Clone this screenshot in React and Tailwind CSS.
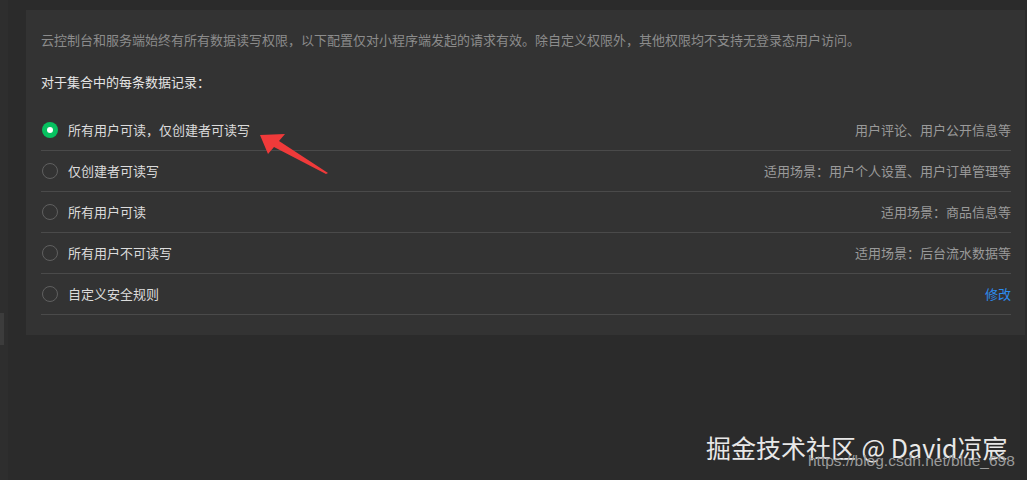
import React, { useState } from "react";

const rules = [
  { label: "所有用户可读，仅创建者可读写", desc: "用户评论、用户公开信息等" },
  { label: "仅创建者可读写", desc: "适用场景：用户个人设置、用户订单管理等" },
  { label: "所有用户可读", desc: "适用场景：商品信息等" },
  { label: "所有用户不可读写", desc: "适用场景：后台流水数据等" },
  { label: "自定义安全规则", desc: "修改", link: true },
];

function Radio({ checked }) {
  if (checked) {
    return (
      <span className="flex h-[16px] w-[16px] items-center justify-center rounded-full bg-[#07c160]">
        <span className="h-[6px] w-[6px] rounded-full bg-white"></span>
      </span>
    );
  }
  return <span className="h-[16px] w-[16px] rounded-full border border-[#606060]"></span>;
}

export default function App() {
  const [selected, setSelected] = useState(0);
  return (
    <div
      className="relative flex h-[480px] w-[1027px] overflow-hidden bg-[#2b2b2b]"
      style={{ fontFamily: '"Noto Sans CJK SC", "Noto Sans", sans-serif' }}
    >
      <div className="relative w-[8px] bg-[#2e2e2e]">
        <div className="absolute left-0 top-[313px] h-[32px] w-[4px] bg-[#3c3c3c]"></div>
      </div>
      <div className="flex-1 pl-[18px] pr-[2px] pt-[10px]">
        <div className="bg-[#333333] pl-[15px] pr-[14px] pt-[20px] pb-[20px]">
          <p className="text-[13px] leading-[20px] tracking-[0px] text-[#8c8c8c]">
            云控制台和服务端始终有所有数据读写权限，以下配置仅对小程序端发起的请求有效。除自定义权限外，其他权限均不支持无登录态用户访问。
          </p>
          <p className="mt-[22px] text-[13px] leading-[20px] text-[#e6e6e6]">对于集合中的每条数据记录：</p>
          <div className="mt-[18px]">
            {rules.map((item, index) => (
              <div
                key={index}
                onClick={() => setSelected(index)}
                className="flex h-[41px] cursor-pointer items-center border-b border-[#4a4a4a] pl-[1px]"
              >
                <Radio checked={selected === index} />
                <span className="ml-[10px] text-[13px] text-[#dcdcdc]">{item.label}</span>
                <span
                  className={
                    item.link
                      ? "ml-auto text-[13px] text-[#2d8cf0]"
                      : "ml-auto text-[13px] text-[#9a9a9a]"
                  }
                >
                  {item.desc}
                </span>
              </div>
            ))}
          </div>
        </div>
      </div>

      <svg className="absolute left-[255px] top-[128px]" width="80" height="50" viewBox="0 0 80 50">
        <polygon points="5,7 30,6 24,13 73,45 71,46 19,19 13,26" fill="#f03a3a" />
      </svg>

      <div className="absolute left-[706px] top-[431px] text-[25px] leading-[32px] text-[#e8e8e8]">
        掘金技术社区 @ David凉宸
      </div>
      <div
        className="absolute left-[808px] top-[451px] text-[15.5px] leading-[20px] text-[#9a9a9a]"
        style={{ fontFamily: '"Liberation Sans", sans-serif' }}
      >
        https://blog.csdn.net/blue_698
      </div>
    </div>
  );
}
